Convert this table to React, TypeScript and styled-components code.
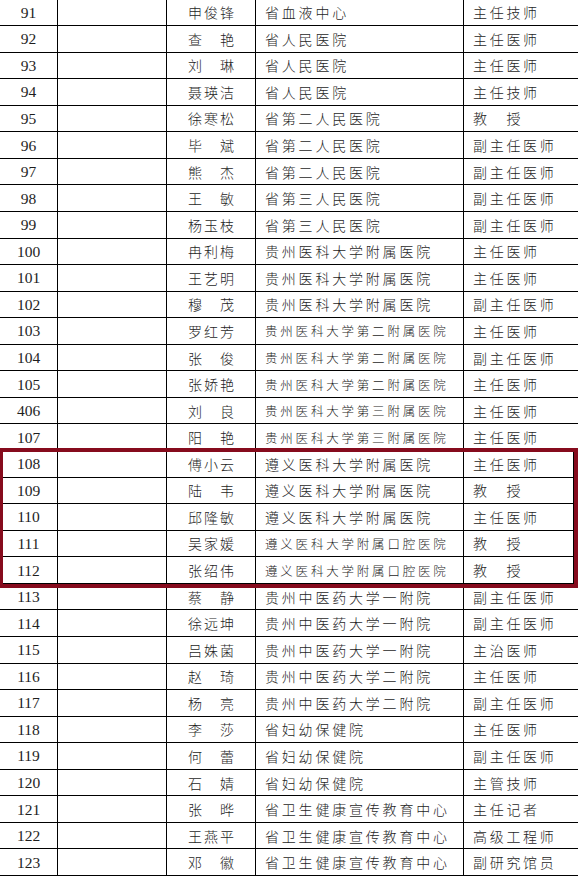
import React from "react";
import styled, { createGlobalStyle } from "styled-components";

const Global = createGlobalStyle`
  html, body { margin: 0; padding: 0; background: #fff; overflow: hidden; }
  body { width: 578px; height: 876px; }
`;

type Row = { no: string; name: string; org: string; title: string };

const rows: Row[] = [
  { no: "91", name: "申俊锋", org: "省血液中心", title: "主任技师" },
  { no: "92", name: "查　艳", org: "省人民医院", title: "主任医师" },
  { no: "93", name: "刘　琳", org: "省人民医院", title: "主任医师" },
  { no: "94", name: "聂瑛洁", org: "省人民医院", title: "主任技师" },
  { no: "95", name: "徐寒松", org: "省第二人民医院", title: "教　授" },
  { no: "96", name: "毕　斌", org: "省第二人民医院", title: "副主任医师" },
  { no: "97", name: "熊　杰", org: "省第二人民医院", title: "副主任医师" },
  { no: "98", name: "王　敏", org: "省第三人民医院", title: "副主任医师" },
  { no: "99", name: "杨玉枝", org: "省第三人民医院", title: "副主任医师" },
  { no: "100", name: "冉利梅", org: "贵州医科大学附属医院", title: "主任医师" },
  { no: "101", name: "王艺明", org: "贵州医科大学附属医院", title: "主任医师" },
  { no: "102", name: "穆　茂", org: "贵州医科大学附属医院", title: "副主任医师" },
  { no: "103", name: "罗红芳", org: "贵州医科大学第二附属医院", title: "主任医师" },
  { no: "104", name: "张　俊", org: "贵州医科大学第二附属医院", title: "副主任医师" },
  { no: "105", name: "张娇艳", org: "贵州医科大学第二附属医院", title: "主任医师" },
  { no: "406", name: "刘　良", org: "贵州医科大学第三附属医院", title: "主任医师" },
  { no: "107", name: "阳　艳", org: "贵州医科大学第三附属医院", title: "主任医师" },
  { no: "108", name: "傅小云", org: "遵义医科大学附属医院", title: "主任医师" },
  { no: "109", name: "陆　韦", org: "遵义医科大学附属医院", title: "教　授" },
  { no: "110", name: "邱隆敏", org: "遵义医科大学附属医院", title: "主任医师" },
  { no: "111", name: "吴家媛", org: "遵义医科大学附属口腔医院", title: "教　授" },
  { no: "112", name: "张绍伟", org: "遵义医科大学附属口腔医院", title: "教　授" },
  { no: "113", name: "蔡　静", org: "贵州中医药大学一附院", title: "副主任医师" },
  { no: "114", name: "徐远坤", org: "贵州中医药大学一附院", title: "副主任医师" },
  { no: "115", name: "吕姝菌", org: "贵州中医药大学一附院", title: "主治医师" },
  { no: "116", name: "赵　琦", org: "贵州中医药大学二附院", title: "主任医师" },
  { no: "117", name: "杨　亮", org: "贵州中医药大学二附院", title: "副主任医师" },
  { no: "118", name: "李　莎", org: "省妇幼保健院", title: "主任医师" },
  { no: "119", name: "何　蕾", org: "省妇幼保健院", title: "副主任医师" },
  { no: "120", name: "石　婧", org: "省妇幼保健院", title: "主管技师" },
  { no: "121", name: "张　晔", org: "省卫生健康宣传教育中心", title: "主任记者" },
  { no: "122", name: "王燕平", org: "省卫生健康宣传教育中心", title: "高级工程师" },
  { no: "123", name: "邓　徽", org: "省卫生健康宣传教育中心", title: "副研究馆员" },
];

const Page = styled.div`
  position: relative;
  width: 578px;
  height: 876px;
  overflow: hidden;
`;

const Table = styled.div`
  margin-top: -0.5625px;
  display: grid;
  grid-template-columns: 58px 109px 89px 208px 130px;
  grid-auto-rows: 26.5625px;
  width: 594px;
`;

const Cell = styled.div<{ $last?: boolean; $align?: "center" | "left" }>`
  box-sizing: border-box;
  border-bottom: 1px solid #000;
  border-right: ${(p) => (p.$last ? "none" : "1px solid #000")};
  display: flex;
  align-items: center;
  justify-content: ${(p) => (p.$align === "left" ? "flex-start" : "center")};
  color: #1e1e1e;
  white-space: nowrap;
  overflow: hidden;
`;

const NoCell = styled(Cell)`
  font-family: "Liberation Serif", "Times New Roman", serif;
  font-size: 15.5px;
  padding-top: 1px;
`;

const CjkCell = styled(Cell)`
  font-family: "Noto Sans CJK SC", sans-serif;
  font-weight: 300;
`;

const NameCell = styled(CjkCell)`
  font-size: 14px;
  letter-spacing: 2px;
  padding-left: 2px;
`;

const OrgCell = styled(CjkCell)<{ $small?: boolean }>`
  font-size: ${(p) => (p.$small ? "12.5px" : "14px")};
  letter-spacing: 2.8px;
  padding-left: 9px;
`;

const TitleCell = styled(CjkCell)`
  font-size: 14px;
  letter-spacing: 2.7px;
  padding-left: 9px;
`;

const Highlight = styled.div`
  position: absolute;
  left: 0;
  top: 448px;
  width: 578px;
  height: 140px;
  box-sizing: border-box;
  border: 4px solid #860b1d;
  border-left-width: 3.5px;
  pointer-events: none;
  &::after {
    content: "";
    position: absolute;
    right: 0;
    top: 0;
    bottom: 0;
    width: 1px;
    background: #000;
  }
`;

export default function App() {
  return (
    <>
      <Global />
      <Page>
        <Table>
          {rows.map((r) => (
            <React.Fragment key={r.no + r.name}>
              <NoCell>{r.no}</NoCell>
              <Cell />
              <NameCell>{r.name}</NameCell>
              <OrgCell $align="left" $small={r.org.length >= 12}>
                {r.org}
              </OrgCell>
              <TitleCell $align="left" $last>
                {r.title}
              </TitleCell>
            </React.Fragment>
          ))}
        </Table>
        <Highlight />
      </Page>
    </>
  );
}
